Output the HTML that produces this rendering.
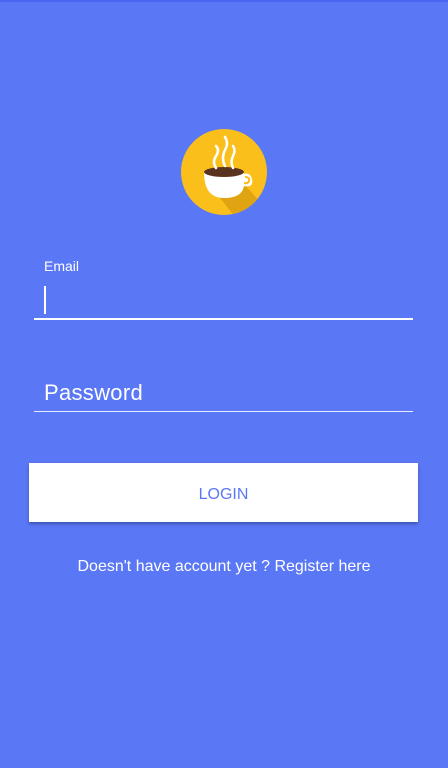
<!DOCTYPE html>
<html><head><meta charset="utf-8"><style>
html,body{margin:0;padding:0}
body{width:448px;height:768px;background:#5a77f5;position:relative;overflow:hidden;font-family:"Liberation Sans",sans-serif;color:#fff}
.top{position:absolute;left:0;top:0;width:448px;height:2px;background:#4a66f0}
.lbl{position:absolute;left:44px;top:258px;font-size:14px}
.cursor{position:absolute;left:44px;top:286px;width:2px;height:28px;background:#fff}
.line1{position:absolute;left:34px;top:318px;width:379px;height:2px;background:#fff}
.pw{position:absolute;left:44px;top:380px;font-size:22px;letter-spacing:.3px}
.line2{position:absolute;left:34px;top:411px;width:379px;height:1px;background:#e8ecff}
.btn{position:absolute;left:29px;top:463px;width:389px;height:59px;background:#fff;box-shadow:0 2px 3px rgba(0,0,0,.3);color:#5a77f5;font-size:16px;text-align:center;line-height:63px}
.reg{position:absolute;left:0;width:448px;top:558px;text-align:center;font-size:16px}
</style></head><body>
<div class="top"></div>
<svg style="position:absolute;left:180px;top:128px" width="88" height="88" viewBox="0 0 88 88">
<defs><clipPath id="c"><circle cx="44" cy="44" r="43"/></clipPath></defs>
<circle cx="44" cy="44" r="43" fill="#fbbf1c"/>
<polygon clip-path="url(#c)" points="40,70 66,58 90,85 60,95" fill="#e0a412"/>
<path d="M24 44 Q24 70 44 70 Q62 70 64 58 Q74 60 72 51 Q70 44 64 46 L64 44 Z" fill="#fff"/>
<path d="M65 49 Q70 49 69 53 Q68 56 64 55" fill="none" stroke="#fbbf1c" stroke-width="2"/>
<ellipse cx="44" cy="44" rx="20" ry="5" fill="#5a3320"/>
<g fill="none" stroke="#fff" stroke-width="2.5" stroke-linecap="round">
<path d="M36 40 Q32 34 36 28 Q40 22 36 18"/>
<path d="M45 38 Q41 30 45 22 Q49 15 45 9"/>
<path d="M53 40 Q50 34 53 28 Q56 22 53 18"/>
</g>
</svg>
<div class="lbl">Email</div>
<div class="cursor"></div>
<div class="line1"></div>
<div class="pw">Password</div>
<div class="line2"></div>
<div class="btn">LOGIN</div>
<div class="reg">Doesn't have account yet ? Register here</div>
</body></html>
